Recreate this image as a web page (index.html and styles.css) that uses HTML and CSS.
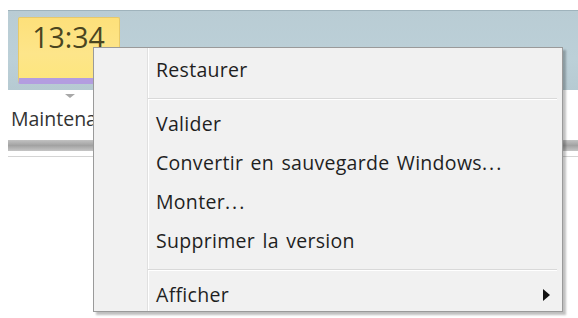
FILE: index.html
```html
<!DOCTYPE html>
<html lang="fr">
<head>
<meta charset="utf-8">
<link rel="stylesheet" href="styles.css">
</head>
<body>
<div class="page">
  <div class="band">
    <div class="tile"><span class="time">13:34</span></div>
  </div>
  <div class="marker"></div>
  <div class="label">Maintenant</div>
  <div class="bar"></div>
  <div class="rule"></div>

  <div class="menu">
    <div class="gutter"></div>
    <ul class="items">
      <li class="item">Restaurer</li>
      <li class="sep"></li>
      <li class="item">Valider</li>
      <li class="item">Convertir en sauvegarde Windows<span class="dots">...</span></li>
      <li class="item">Monter<span class="dots">...</span></li>
      <li class="item">Supprimer la version</li>
      <li class="sep"></li>
      <li class="item has-sub">Afficher<span class="arrow"></span></li>
    </ul>
  </div>
</div>
</body>
</html>
```

FILE: styles.css
```css
html, body {
  margin: 0;
  padding: 0;
  background: #ffffff;
}
body {
  width: 578px;
  height: 318px;
  overflow: hidden;
  font-family: "Open Sans", "Noto Sans", sans-serif;
  font-variant-ligatures: none;
}
.page {
  position: relative;
  width: 578px;
  height: 318px;
  padding-top: 10px;
  box-sizing: border-box;
}
.band {
  margin-left: 8px;
  height: 79px;
  background: linear-gradient(#b9ccd4, #bcd0d8 60%, #b6cad2);
  border-top: 1px solid #9fb3bc;
  display: flex;
  align-items: flex-start;
}
.tile {
  margin: 6px 0 0 10px;
  width: 100px;
  height: 60px;
  background: linear-gradient(#fde07a, #fde58a 60%, #fde67e);
  border: 1px solid #e7c96a;
  border-bottom: 6px solid #b39de0;
  border-radius: 2px;
  display: flex;
  justify-content: center;
}
.time {
  font-family: "Open Sans", sans-serif;
  font-size: 28.5px;
  line-height: 38px;
  color: #4a4520;
  margin-left: -1px;
}
.marker {
  margin: 4px 0 0 65px;
  width: 0;
  height: 0;
  border-left: 5px solid transparent;
  border-right: 5px solid transparent;
  border-top: 4px solid #a8a8a8;
}
.label {
  margin: 10px 0 0 11px;
  font-size: 19.5px;
  line-height: 22px;
  height: 22px;
  color: #333333;
  white-space: nowrap;
}
.bar {
  margin-top: 10px;
  margin-left: 8px;
  height: 11px;
  background: linear-gradient(#c2c2c2, #a2a2a2 50%, #c6c6c6);
}
.rule {
  margin-top: 5px;
  margin-left: 8px;
  height: 1px;
  background: #d4d4d4;
}
.menu {
  position: absolute;
  left: 93px;
  top: 47px;
  width: 468px;
  height: 263px;
  background: #f1f1f1;
  border: 1px solid #9a9a9a;
  box-shadow: 3px 3px 2px rgba(0, 0, 0, 0.25);
  display: flex;
}
.gutter {
  width: 53px;
  border-right: 1px solid #e0e0e0;
  box-shadow: 1px 0 0 #ffffff;
  flex: none;
}
.items {
  list-style: none;
  margin: 0;
  padding: 0;
  flex: 1;
}
.item {
  height: 39px;
  box-sizing: border-box;
  padding: 12px 0 0 8px;
  font-size: 19.5px;
  line-height: 20px;
  letter-spacing: 0.3px;
  word-spacing: 2px;
  color: #1f1f1f;
  position: relative;
  white-space: nowrap;
}
.dots {
  letter-spacing: 2px;
}
.sep {
  height: 15px;
  box-sizing: border-box;
  padding-top: 11px;
  margin-right: 5px;
}
.sep::before {
  content: "";
  display: block;
  height: 1px;
  background: #d9d9d9;
  border-bottom: 1px solid #ffffff;
}
.arrow {
  position: absolute;
  right: 12px;
  top: 16px;
  width: 0;
  height: 0;
  border-top: 6px solid transparent;
  border-bottom: 6px solid transparent;
  border-left: 7px solid #111111;
}
```
